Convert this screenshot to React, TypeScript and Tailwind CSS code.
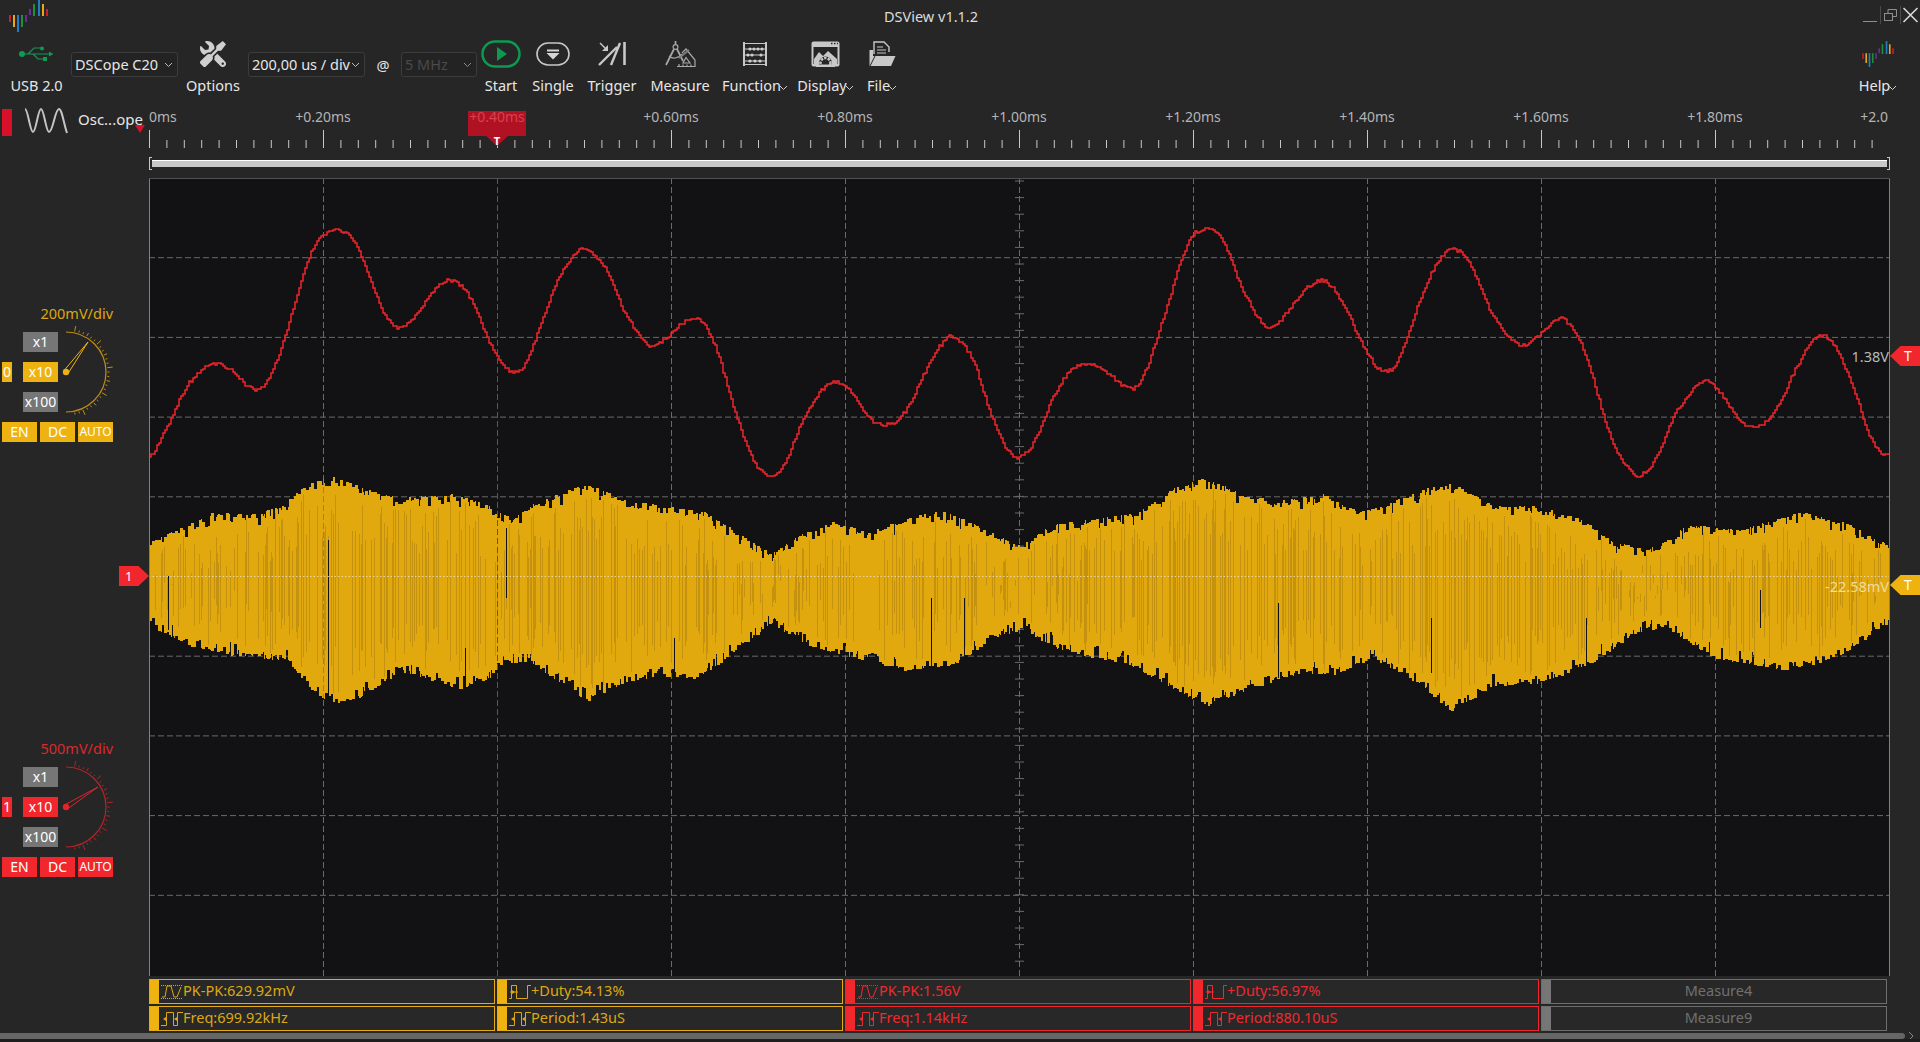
import React from 'react'
import { FaTools } from 'react-icons/fa'

type Pt = [number, number]

// traces were read off the picture at 1568 wide, plot starts at 149.5/178 in full size
const S = 1920 / 1568
const toPlot = (p: Pt[]): Pt[] => p.map(([x, y]) => [x * S - 149.5, y * S - 178])

const RED = toPlot([
  [122, 373], [135, 352], [150, 320], [165, 302], [177, 297], [190, 303], [203, 316], [215, 315], [228, 290], [240, 250],
  [255, 205], [268, 190], [277, 188], [290, 198], [305, 235], [318, 262], [330, 267], [345, 250], [360, 232], [372, 230],
  [385, 245], [400, 280], [415, 302], [427, 300], [440, 270], [455, 230], [470, 208], [480, 204], [495, 220], [510, 255],
  [530, 282], [545, 275], [560, 262], [572, 262], [585, 285], [600, 335], [615, 375], [628, 388], [640, 380], [655, 345],
  [670, 320], [683, 312], [695, 320], [710, 342], [725, 347], [740, 335], [755, 305], [770, 280], [780, 276], [795, 295],
  [810, 340], [825, 370], [833, 373], [845, 360], [860, 325], [875, 302], [890, 297], [905, 305], [920, 316], [932, 310],
  [950, 260], [970, 200], [985, 187], [998, 195], [1012, 230], [1030, 262], [1040, 267], [1055, 250], [1070, 233], [1082, 230],
  [1095, 245], [1115, 285], [1130, 303], [1142, 293], [1160, 245], [1175, 213], [1187, 204], [1200, 215], [1218, 255], [1240, 281],
  [1255, 275], [1270, 262], [1280, 263], [1295, 290], [1315, 355], [1330, 382], [1340, 388], [1352, 375], [1370, 335], [1390, 313],
  [1400, 315], [1420, 342], [1435, 348], [1450, 335], [1470, 295], [1485, 275], [1498, 282], [1515, 320], [1530, 362], [1544, 373],
])

const TOP = toPlot([
  [122, 443], [150, 430], [175, 418], [205, 420], [230, 413], [250, 396], [272, 389], [290, 396], [310, 403], [330, 406],
  [370, 403], [400, 413], [420, 423], [440, 408], [480, 395], [510, 408], [540, 413], [575, 418], [600, 433], [630, 453],
  [650, 438], [680, 426], [710, 435], [740, 423], [770, 416], [800, 430], [833, 445], [860, 428], [900, 423], [930, 418],
  [960, 398], [985, 390], [1020, 406], [1050, 408], [1080, 403], [1110, 418], [1130, 413], [1160, 400], [1185, 394], [1220, 413],
  [1260, 413], [1290, 423], [1320, 443], [1345, 448], [1380, 428], [1420, 433], [1470, 418], [1510, 428], [1544, 446],
])

const BOTTOM = toPlot([
  [122, 512], [155, 528], [196, 537], [232, 540], [245, 553], [258, 568], [273, 575], [294, 570], [327, 550], [351, 556], [375, 563],
  [400, 555], [408, 543], [433, 541], [450, 553], [480, 573], [510, 558], [540, 553], [570, 555], [600, 533], [630, 510],
  [660, 528], [700, 538], [740, 548], [780, 543], [810, 523], [833, 515], [870, 533], [920, 543], [950, 558], [985, 578],
  [1020, 563], [1060, 551], [1090, 551], [1120, 538], [1150, 553], [1185, 581], [1220, 561], [1260, 558], [1300, 543], [1335, 518],
  [1360, 513], [1400, 538], [1460, 548], [1500, 538], [1544, 508],
])

function lerp(pts: Pt[], x: number) {
  for (let i = 1; i < pts.length; i++) {
    if (x <= pts[i][0]) {
      const [x0, y0] = pts[i - 1]
      const [x1, y1] = pts[i]
      return y0 + ((y1 - y0) * (x - x0)) / (x1 - x0)
    }
  }
  return pts[pts.length - 1][1]
}

function smooth(pts: Pt[], x: number) {
  let i = 1
  while (i < pts.length - 1 && x > pts[i][0]) i++
  const p0 = pts[Math.max(i - 2, 0)]
  const p1 = pts[i - 1]
  const p2 = pts[i]
  const p3 = pts[Math.min(i + 1, pts.length - 1)]
  const t = (x - p1[0]) / (p2[0] - p1[0])
  return (
    0.5 *
    (2 * p1[1] +
      (p2[1] - p0[1]) * t +
      (2 * p0[1] - 5 * p1[1] + 4 * p2[1] - p3[1]) * t * t +
      (3 * p1[1] - p0[1] - 3 * p2[1] + p3[1]) * t * t * t)
  )
}

let seed = 41
const rnd = () => {
  seed = (seed * 1664525 + 1013904223) % 4294967296
  return seed / 4294967296
}

function buildRed() {
  let y = Math.round(smooth(RED, 0))
  let d = `M0 ${y}`
  for (let x = 1; x <= 1740; x++) {
    // the sampled trace steps in small stairs and now and then jumps
    if (x % 2 === 0) y = Math.round(smooth(RED, x) + (rnd() - 0.5) * 3.2)
    d += `H${x}V${y}`
  }
  return d
}

function buildYellow() {
  let light = ''
  let dark = ''
  let x = 0
  while (x < 1740) {
    // columns of 1-3 px share one height, that gives the comb along the edges
    const w = 1 + Math.floor(rnd() * 3)
    const top = lerp(TOP, x) + rnd() * rnd() * 13
    const bottom = lerp(BOTTOM, x) - rnd() * rnd() * 15
    for (let i = 0; i < w && x + i < 1740; i++) {
      light += `M${x + i + 0.5} ${top.toFixed(0)}V${bottom.toFixed(0)}`
    }
    if (rnd() > 0.35) {
      const a = top + 4 + rnd() * 50
      const b = bottom - 4 - rnd() * 50
      dark += `M${x + 0.5} ${a.toFixed(0)}V${b.toFixed(0)}`
    }
    x += w
  }
  return { light, dark }
}

const redPath = buildRed()
const yellow = buildYellow()

// thin gaps and spikes in the yellow block
const GAPS: [number, number, number][] = [
  [19, 398, 452], [179, 362, 530], [316, 470, 530], [357, 350, 420], [525, 460, 530], [782, 420, 495],
  [815, 420, 500], [1129, 425, 500], [1282, 440, 495], [1611, 412, 450], [1437, 440, 520],
]

const HLINES = [79.7, 159.4, 239.1, 318.8, 478.2, 557.9, 637.6, 717.3]
const VLINES = [174, 522, 696, 1044, 1218, 1392, 1566]
const MID_TICKS = Array.from({ length: 49 }, (_, i) => i * 16.6)
const RULER_TICKS = Array.from({ length: 100 }, (_, i) => i)
const RULER_LABELS = ['+0.20ms', '', '+0.60ms', '+0.80ms', '+1.00ms', '+1.20ms', '+1.40ms', '+1.60ms', '+1.80ms']

function Logo({ w, h }: { w: number; h: number }) {
  const bars: [number, number, number, string][] = [
    [0, 15, 22, '#d11a2a'], [4, 15, 27, '#e6a817'], [8, 15, 32, '#1f7fc4'], [12, 15, 27, '#1f8f3a'], [16, 15, 22, '#6a2ca0'],
    [20, 9, 15, '#6a2ca0'], [24, 4, 16, '#1f8f3a'], [29, 0, 16, '#1f7fc4'], [33, 4, 16, '#e6a817'], [37, 9, 16, '#d11a2a'],
  ]
  return (
    <svg width={w} height={h} viewBox="0 0 39 32">
      {bars.map(([x, a, b, c]) => (
        <rect key={x} x={x} y={a} width="2" height={b - a} fill={c} />
      ))}
    </svg>
  )
}

function Chevron({ color = '#bdbdbd' }: { color?: string }) {
  return (
    <svg width="9" height="6" viewBox="0 0 9 6" className="shrink-0">
      <path d="M1 1l3.5 3.5L8 1" fill="none" stroke={color} strokeWidth="1" />
    </svg>
  )
}

function Select({ label, width, disabled }: { label: string; width: string; disabled?: boolean }) {
  return (
    <div className={`${width} mt-[16px] h-[25px] self-start rounded-[3px] border border-[#3c3c3c] bg-[#232323] flex items-center justify-between pl-[3px] pr-[4px] text-[14.5px]`}>
      <span className={`whitespace-nowrap ${disabled ? 'text-[#4a4a4a]' : 'text-[#e6e6e6]'}`}>{label}</span>
      <Chevron color={disabled ? '#8a8a8a' : '#bdbdbd'} />
    </div>
  )
}

function Tool({ label, width, menu, children }: { label: string; width: string; menu?: boolean; children: React.ReactNode }) {
  return (
    <div className={`${width} shrink-0 flex flex-col items-center`}>
      <div className="h-[36px] flex items-center justify-center">{children}</div>
      <div className="mt-[3px] h-[20px] leading-[20px] text-[14.5px] text-[#e6e6e6] flex items-center whitespace-nowrap">
        {label}
        {menu && <span className="mt-[5px] -ml-[2px]"><Chevron color="#d0d0d0" /></span>}
      </div>
    </div>
  )
}

function Knob({ color, tip }: { color: string; tip: Pt }) {
  const cx = 8
  const cy = 46
  const ticks = Array.from({ length: 27 }, (_, i) => -78 + i * 6)
  return (
    <svg width="58" height="92" viewBox="0 0 58 92" className="-my-[6px] shrink-0">
      <path d={`M${cx} ${cy - 40}A40 40 0 0 1 ${cx} ${cy + 40}`} fill="none" stroke={color} strokeWidth="1.2" opacity="0.75" />
      {ticks.map((a, i) => {
        const r = (a * Math.PI) / 180
        const outer = i % 6 === 0 ? 47 : i % 3 === 0 ? 45 : 43.5
        return (
          <line
            key={a}
            x1={cx + 41.5 * Math.cos(r)}
            y1={cy + 41.5 * Math.sin(r)}
            x2={cx + outer * Math.cos(r)}
            y2={cy + outer * Math.sin(r)}
            stroke={color}
            strokeWidth="1"
            opacity="0.75"
          />
        )
      })}
      <polygon points={`${cx - 1.5} ${cy - 2} ${cx + tip[0]} ${cy + tip[1]} ${cx + 2} ${cy + 1.5}`} fill="none" stroke={color} strokeWidth="1" />
      <circle cx={cx} cy={cy} r="3.2" fill={color} />
    </svg>
  )
}

function Channel({ volts, index, bg, text, color, tip, top }: { volts: string; index: string; bg: string; text: string; color: string; tip: Pt; top: string }) {
  const gray = 'w-[35px] h-[20px] bg-[#767676] text-white text-[14px] leading-[20px] text-center whitespace-nowrap'
  const btn = `h-[20px] text-white text-[14px] leading-[20px] text-center whitespace-nowrap ${bg}`
  return (
    <div className={top}>
      <div className={`w-[113px] h-[16px] leading-[14px] text-right text-[14.5px] ${text}`}>{volts}</div>
      <div className="mt-[10px] flex items-center">
        <div className={`ml-[2px] w-[10px] ${btn}`}>{index}</div>
        <div className="ml-[11px] w-[35px] flex flex-col gap-[10px]">
          <div className={gray}>x1</div>
          <div className={`w-[35px] ${btn}`}>x10</div>
          <div className={gray}>x100</div>
        </div>
        <Knob color={color} tip={tip} />
      </div>
      <div className="mt-[10px] ml-[2px] flex gap-[3px]">
        <div className={`w-[35px] ${btn}`}>EN</div>
        <div className={`w-[35px] ${btn}`}>DC</div>
        <div className={`w-[35px] h-[20px] text-white text-[12px] leading-[20px] text-center whitespace-nowrap ${bg}`}>AUTO</div>
      </div>
    </div>
  )
}

function PulseIcon({ kind }: { kind: 'pk' | 'duty' | 'freq' }) {
  return (
    <svg width="22" height="16" viewBox="0 0 22 16" className="shrink-0" fill="none" stroke="currentColor" strokeWidth="1">
      {kind === 'pk' && (
        <>
          <path d="M0 1.5H22M0 14.5H22" strokeDasharray="1 1" />
          <path d="M1 13H4L6 2H10L13 13H16L20 3" />
        </>
      )}
      {kind === 'duty' && (
        <>
          <path d="M0 14.5H2.5V1.5H7.5V14.5H18.5V1.5H22" />
          <path d="M1 8H9" />
          <path d="M3 6V10L6 8Z" fill="currentColor" stroke="none" />
        </>
      )}
      {kind === 'freq' && (
        <>
          <path d="M0 14.5H5.5V1.5H12.5V14.5H16.5V1.5H22" />
          <path d="M2 8L5 6V10ZM13 8L16 6V10Z" fill="currentColor" stroke="none" />
        </>
      )}
    </svg>
  )
}

function Measure({ kind, label, tone }: { kind?: 'pk' | 'duty' | 'freq'; label: string; tone: 'yellow' | 'red' | 'gray' }) {
  const box =
    tone === 'yellow'
      ? 'border-[#e6ab12] text-[#dca812]'
      : tone === 'red'
        ? 'border-[#ee262c] text-[#ee2a30]'
        : 'border-[#6e6e6e] text-[#707070]'
  const stripe = tone === 'yellow' ? 'bg-[#eeb211]' : tone === 'red' ? 'bg-[#f2272d]' : 'bg-[#767676]'
  return (
    <div className={`h-[25px] border bg-[#282828] flex items-center text-[14.5px] overflow-hidden ${box}`}>
      <div className={`w-[9px] h-full shrink-0 ${stripe}`} />
      {kind ? (
        <div className="flex items-center pl-[2px]">
          <PulseIcon kind={kind} />
          <span className="mb-[2px] whitespace-nowrap">{label}</span>
        </div>
      ) : (
        <span className="flex-1 mb-[2px] text-center">{label}</span>
      )}
    </div>
  )
}

function Plot() {
  return (
    <svg width="1741" height="798" viewBox="0 0 1741 798" className="block">
      <rect width="1741" height="798" fill="#121214" />
      {HLINES.map(y => (
        <line key={y} x1="0" x2="1741" y1={y} y2={y} stroke="#6a6a6a" strokeDasharray="6 3" />
      ))}
      {VLINES.map(x => (
        <line key={x} x1={x + 0.5} x2={x + 0.5} y1="0" y2="798" stroke="#6a6a6a" strokeDasharray="6 3" />
      ))}
      <line x1="870.5" x2="870.5" y1="0" y2="798" stroke="#6a6a6a" strokeDasharray="6 3" />
      {MID_TICKS.map(y => (
        <line key={y} x1="866" x2="875" y1={y + 3} y2={y + 3} stroke="#6a6a6a" />
      ))}
      <path d={redPath} fill="none" stroke="#f0262c" strokeWidth="1.5" />
      <path d={yellow.light} stroke="#e2a90f" strokeWidth="1" />
      <path d={yellow.dark} stroke="#c4920f" strokeWidth="1" />
      {GAPS.map(([x, a, b], i) => (
        <line key={i} x1={x + 0.5} x2={x + 0.5} y1={a} y2={b} stroke="#121214" strokeWidth="1" />
      ))}
      <line x1="174.5" x2="174.5" y1="300" y2="520" stroke="#a8821a" strokeDasharray="6 3" />
      <line x1="0" x2="1741" y1="398.5" y2="398.5" stroke="#efe6cf" strokeWidth="1" strokeDasharray="1.5 2" opacity="0.75" />
      <line x1="348.5" x2="348.5" y1="0" y2="798" stroke="#c22a30" strokeWidth="1" strokeDasharray="6 3" />
      <line x1="0.5" x2="0.5" y1="0" y2="798" stroke="#808080" />
      <line x1="1740.5" x2="1740.5" y1="0" y2="798" stroke="#808080" />
      <line x1="0" x2="1741" y1="0.5" y2="0.5" stroke="#505050" />
    </svg>
  )
}

export default function App() {
  return (
    <div className="w-[1920px] h-[1042px] flex flex-col overflow-hidden bg-[#262626] text-[#e6e6e6] font-['Noto_Sans','Open_Sans',sans-serif]">
      {/* Title bar */}
      <div className="h-[33px] shrink-0 flex items-start">
        <div className="ml-[9px]">
          <Logo w={39} h={32} />
        </div>
        <div className="flex-1 pr-[46px] h-[33px] leading-[33px] text-center text-[14.5px] text-[#dcdcdc]">DSView v1.1.2</div>
        <svg width="60" height="33" viewBox="0 0 60 33" className="shrink-0">
          <path d="M3 21.5H17" stroke="#8f8f8f" />
          <path d="M20.5 6V24M40.5 6V24" stroke="#4a4a4a" />
          <rect x="24.5" y="13.5" width="8" height="7" fill="none" stroke="#8f8f8f" />
          <path d="M28 13V9.5H36.5V16.5H33" fill="none" stroke="#8f8f8f" />
          <path d="M43.5 8L57.5 22M57.5 8L43.5 22" stroke="#d8d8d8" strokeWidth="1.6" />
        </svg>
      </div>

      {/* Toolbar */}
      <div className="h-[72px] shrink-0 pt-[3px] flex">
        <div className="ml-[2px]">
          <Tool label="USB 2.0" width="w-[69px]">
            <svg width="35" height="16" viewBox="0 0 35 16">
              <circle cx="3" cy="8" r="3" fill="#0f9a55" />
              <path d="M3 8H31M9 8L15 2H22M14 8L19 13H25" fill="none" stroke="#0f9a55" strokeWidth="1.2" />
              <circle cx="23" cy="2.4" r="2" fill="#0f9a55" />
              <rect x="24" y="11" width="4" height="4" fill="#0f9a55" />
              <path d="M30 5.5L34.5 8L30 10.5Z" fill="#0f9a55" />
            </svg>
          </Tool>
        </div>
        <Select label="DSCope C20" width="w-[107px]" />
        <Tool label="Options" width="w-[70px]">
          <FaTools className="w-[26px] h-[26px] text-[#cfcfcf] -scale-x-100" />
        </Tool>
        <Select label="200,00 us / div" width="w-[117px]" />
        <div className="w-[36px] mt-[16px] h-[25px] leading-[27px] text-center text-[14.5px]">@</div>
        <Select label="5 MHz" width="w-[76px]" disabled />
        <Tool label="Start" width="w-[48px]">
          <svg width="40" height="28" viewBox="0 0 40 28">
            <rect x="1.5" y="1.5" width="37" height="25" rx="12.5" fill="none" stroke="#0d9a50" strokeWidth="2.5" />
            <path d="M16 7L26 14L16 21Z" fill="#0d9a50" />
          </svg>
        </Tool>
        <Tool label="Single" width="w-[56px]">
          <svg width="34" height="24" viewBox="0 0 34 24">
            <rect x="1" y="1" width="32" height="22" rx="11" fill="none" stroke="#c8c8c8" strokeWidth="1.6" />
            <path d="M11 7.5H23V9.5H11ZM10.5 11H23.5L17 17.5Z" fill="#d4d4d4" />
          </svg>
        </Tool>
        <Tool label="Trigger" width="w-[62px]">
          <svg width="29" height="24" viewBox="0 0 29 24" fill="none" stroke="#c8c8c8">
            <path d="M1 23L19 5M13 23L22 1" strokeWidth="2.4" />
            <path d="M26.5 0V23" strokeWidth="2.6" />
            <path d="M2 1L9 8" strokeWidth="1.4" />
            <path d="M10 3V9H4Z" fill="#c8c8c8" stroke="none" />
          </svg>
        </Tool>
        <Tool label="Measure" width="w-[74px]">
          <svg width="31" height="27" viewBox="0 0 31 27" fill="none" stroke="#a8a8a8" strokeWidth="1.2">
            <circle cx="10.5" cy="6" r="2.4" />
            <path d="M10.5 0V3.5M9 8L1 24M12 8L18 20" strokeWidth="1.7" />
            <path d="M4 15C7 18 13 18 17 13" />
            <path d="M12 25.5H30V19L21 8L17 12" />
            <path d="M18 22H25L21 16.5Z" />
            <path d="M14 17L24 9" strokeWidth="2" stroke="#7d7d7d" />
            <path d="M14 25.5V23M18 25.5V23.5M22 25.5V23.5M26 25.5V23.5" />
          </svg>
        </Tool>
        <Tool label="Function" width="w-[76px]" menu>
          <svg width="24" height="24" viewBox="0 0 24 24" fill="none" stroke="#c8c8c8">
            <path d="M1 0V24M23 0V24" strokeWidth="2" />
            <path d="M1 1.5H23M1 22.5H23M1 7H23M1 13H23M1 19H23" strokeWidth="1" />
            <g fill="#d0d0d0" stroke="none">
              <circle cx="7" cy="7" r="1.6" /><circle cx="11" cy="7" r="1.6" /><circle cx="15" cy="7" r="1.6" /><circle cx="19" cy="7" r="1.6" />
              <circle cx="5" cy="13" r="1.6" /><circle cx="9" cy="13" r="1.6" /><circle cx="18" cy="13" r="1.6" />
              <circle cx="7" cy="19" r="1.6" /><circle cx="12" cy="19" r="1.6" /><circle cx="17" cy="19" r="1.6" />
            </g>
          </svg>
        </Tool>
        <Tool label="Display" width="w-[65px]" menu>
          <svg width="29" height="26" viewBox="0 0 29 26">
            <rect x="0.5" y="0.5" width="28" height="25" rx="2" fill="#c8c8c8" />
            <rect x="2.5" y="6" width="24" height="17" fill="#262626" />
            <path d="M20 2.5H21.5M23 2.5H24.5M26 2.5H27" stroke="#262626" strokeWidth="1.5" />
            <path d="M3 18L8 11L12 15L17 10L26 18V23H3Z" fill="#c8c8c8" />
            <circle cx="14.5" cy="22" r="6.5" fill="#262626" />
            <circle cx="14.5" cy="22" r="5" fill="none" stroke="#c8c8c8" strokeWidth="2.6" strokeDasharray="2.4 1.2" />
            <path d="M5 23.5H24V26H5Z" fill="#c8c8c8" />
          </svg>
        </Tool>
        <Tool label="File" width="w-[48px]" menu>
          <svg width="27" height="26" viewBox="0 0 27 26">
            <path d="M5 13V1H15L20 6V11" fill="none" stroke="#c8c8c8" strokeWidth="1.4" />
            <path d="M8 6H14M8 9H17M8 12H17" stroke="#c8c8c8" strokeWidth="1.2" />
            <path d="M0.5 25V9H4V15H26.5L22 25Z" fill="#c8c8c8" />
            <path d="M1 25L6 15" stroke="#262626" />
          </svg>
        </Tool>
        <div className="flex-1" />
        <div className="mr-[12px]">
          <Tool label="Help" width="w-[60px]" menu>
            <Logo w={32} h={26} />
          </Tool>
        </div>
      </div>

      {/* Main area */}
      <div className="h-[928px] shrink-0 flex">
        {/* Channel column */}
        <div className="w-[149px] shrink-0 relative">
          <div className="h-[31px] flex items-end">
            <div className="ml-[2px] w-[10px] h-[27px] bg-[#d8102a]" />
            <svg width="44" height="28" viewBox="0 0 44 28" className="ml-[12px] mb-[1px]" fill="none" stroke="#c4c4c4" strokeWidth="2">
              <path d="M1 2C4 2 6 25 9 25C12 25 14 2 17 2C20 2 22 25 25 25C29 25 31 2 35 2C38 2 40 18 43 26" />
            </svg>
            <span className="ml-[10px] mb-[6px] text-[15px] whitespace-nowrap">Osc...ope</span>
          </div>
          <div className="absolute left-[135px] top-[20px] w-0 h-0 border-l-[5px] border-r-[5px] border-t-[8px] border-l-transparent border-r-transparent border-t-[#d8102a]" />
          <Channel volts="200mV/div" index="0" bg="bg-[#eeb211]" text="text-[#dca812]" color="#eeb211" tip={[22, -30]} top="mt-[170px]" />
          <Channel volts="500mV/div" index="1" bg="bg-[#f2272d]" text="text-[#d92a30]" color="#e0252b" tip={[32, -20]} top="mt-[299px]" />
        </div>

        {/* Ruler, plot and measures */}
        <div className="w-[1741px] shrink-0 relative">
          <div className="h-[25px] flex text-[14px] text-[#b4b4b4] leading-[23px]">
            <div className="w-[87px] shrink-0">0ms</div>
            {RULER_LABELS.map((l, i) => (
              <div key={i} className="w-[174px] shrink-0 text-center">{l}</div>
            ))}
            <div className="w-[87px] shrink-0 text-right pr-[1px]">+2.0</div>
          </div>
          <svg width="1741" height="18" viewBox="0 0 1741 18" className="block">
            {RULER_TICKS.map(i => (
              <line key={i} x1={i * 17.4 + 0.5} x2={i * 17.4 + 0.5} y1={i % 10 === 0 ? 0 : 10} y2="18" stroke="#c8c8c8" />
            ))}
          </svg>
          <div className="mt-[9px] h-[13px] flex items-center">
            <div className="w-[3px] h-[13px] border-l border-t border-b border-[#c8c8c8]" />
            <div className="flex-1 h-[7px] bg-[#c8c8c8] border-t border-white" />
            <div className="w-[3px] h-[13px] border-r border-t border-b border-[#c8c8c8]" />
          </div>
          <div className="mt-[8px] relative">
            <Plot />
            {/* channel and trigger flags */}
            <div className="absolute -left-[30px] top-[388px] w-[30px] h-[20px] bg-[#f2272d] [clip-path:polygon(0_0,65%_0,100%_50%,65%_100%,0_100%)] text-white text-[13px] leading-[20px] pl-[6px]">1</div>
            <div className="absolute left-[1741px] top-[168px] w-[30px] h-[20px] bg-[#f2272d] [clip-path:polygon(35%_0,100%_0,100%_100%,35%_100%,0_50%)] text-white text-[14px] leading-[20px] pl-[14px]">T</div>
            <div className="absolute left-[1741px] top-[397px] w-[30px] h-[20px] bg-[#eeb211] [clip-path:polygon(35%_0,100%_0,100%_100%,35%_100%,0_50%)] text-white text-[14px] leading-[20px] pl-[14px]">T</div>
            <div className="absolute right-[1px] top-[168px] h-[20px] leading-[20px] text-[14.5px] text-[#b8b8b8]">1.38V</div>
            <div className="absolute right-[1px] top-[398px] h-[20px] leading-[20px] text-[14.5px] text-[#f0dca0]">-22.58mV</div>
          </div>
          <div className="mt-[3px] grid grid-cols-[repeat(5,346px)] gap-[2px]">
            <Measure kind="pk" label="PK-PK:629.92mV" tone="yellow" />
            <Measure kind="duty" label="+Duty:54.13%" tone="yellow" />
            <Measure kind="pk" label="PK-PK:1.56V" tone="red" />
            <Measure kind="duty" label="+Duty:56.97%" tone="red" />
            <Measure label="Measure4" tone="gray" />
            <Measure kind="freq" label="Freq:699.92kHz" tone="yellow" />
            <Measure kind="freq" label="Period:1.43uS" tone="yellow" />
            <Measure kind="freq" label="Freq:1.14kHz" tone="red" />
            <Measure kind="freq" label="Period:880.10uS" tone="red" />
            <Measure label="Measure9" tone="gray" />
          </div>
          {/* trigger cursor on the ruler */}
          <div className="absolute left-[319px] top-[6px] w-[58px] h-[25px] bg-[#b01224] text-center text-[14px] leading-[12px] pt-[0px] text-[#d8404c] whitespace-nowrap">+0.40ms</div>
          <div className="absolute left-[337px] top-[31px] w-[22px] h-[10px] bg-[#b01224] [clip-path:polygon(0_0,100%_0,50%_100%)]" />
          <div className="absolute left-[343px] top-[31px] w-[10px] h-[10px] text-center text-white text-[11px] font-bold leading-[10px]">T</div>
        </div>
      </div>

      {/* Bottom scrollbar */}
      <div className="h-[6px] shrink-0 flex items-center">
        <div className="w-[1905px] h-[6px] rounded-r-[3px] bg-[#666666]" />
        <svg width="8" height="8" viewBox="0 0 8 8" className="ml-[2px]">
          <path d="M2 0L6 4L2 8" fill="none" stroke="#888888" />
        </svg>
      </div>
      <div className="flex-1 bg-[#1e1e1e]" />
    </div>
  )
}
